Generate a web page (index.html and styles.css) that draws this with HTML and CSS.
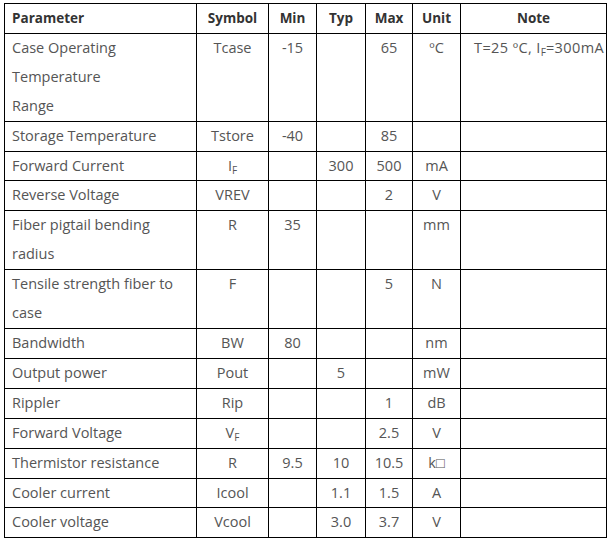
FILE: index.html
```html
<!DOCTYPE html>
<html>
<head>
<meta charset="utf-8">
<link rel="stylesheet" href="styles.css">
</head>
<body>
<table class="spec">
<colgroup>
<col class="c-param"><col class="c-sym"><col class="c-min"><col class="c-typ"><col class="c-max"><col class="c-unit"><col class="c-note">
</colgroup>
<thead>
<tr><th class="left">Parameter</th><th>Symbol</th><th>Min</th><th>Typ</th><th>Max</th><th>Unit</th><th>Note</th></tr>
</thead>
<tbody>
<tr><td class="left">Case Operating<br>Temperature<br>Range</td><td>Tcase</td><td>-15</td><td></td><td>65</td><td>ºC</td><td class="note">T=25 ºC, I<sub>F</sub>=300mA</td></tr>
<tr><td class="left">Storage Temperature</td><td>Tstore</td><td>-40</td><td></td><td>85</td><td></td><td></td></tr>
<tr><td class="left">Forward Current</td><td>I<sub>F</sub></td><td></td><td>300</td><td>500</td><td>mA</td><td></td></tr>
<tr><td class="left">Reverse Voltage</td><td>VREV</td><td></td><td></td><td>2</td><td>V</td><td></td></tr>
<tr><td class="left">Fiber pigtail bending<br>radius</td><td>R</td><td>35</td><td></td><td></td><td>mm</td><td></td></tr>
<tr><td class="left">Tensile strength fiber to<br>case</td><td>F</td><td></td><td></td><td>5</td><td>N</td><td></td></tr>
<tr><td class="left">Bandwidth</td><td>BW</td><td>80</td><td></td><td></td><td>nm</td><td></td></tr>
<tr><td class="left">Output power</td><td>Pout</td><td></td><td>5</td><td></td><td>mW</td><td></td></tr>
<tr><td class="left">Rippler</td><td>Rip</td><td></td><td></td><td>1</td><td>dB</td><td></td></tr>
<tr><td class="left">Forward Voltage</td><td>V<sub>F</sub></td><td></td><td></td><td>2.5</td><td>V</td><td></td></tr>
<tr><td class="left">Thermistor resistance</td><td>R</td><td>9.5</td><td>10</td><td>10.5</td><td>k□</td><td></td></tr>
<tr><td class="left">Cooler current</td><td>Icool</td><td></td><td>1.1</td><td>1.5</td><td>A</td><td></td></tr>
<tr><td class="left">Cooler voltage</td><td>Vcool</td><td></td><td>3.0</td><td>3.7</td><td>V</td><td></td></tr>
</tbody>
</table>
</body>
</html>
```
FILE: styles.css
```css
html, body {
  margin: 0;
  background: #fff;
}
body {
  padding: 3px 0 0 4px;
  font-family: "Open Sans", "Noto Sans", sans-serif;
  font-size: 14.5px;
  color: #555;
}
.spec {
  border-collapse: collapse;
  table-layout: fixed;
  width: 603px;
}
.c-param { width: 192px; }
.c-sym { width: 72px; }
.c-min { width: 48px; }
.c-typ { width: 49px; }
.c-max { width: 47px; }
.c-unit { width: 48px; }
.c-note { width: 146px; }
.spec th, .spec td {
  border: 1px solid #000;
  padding: 0 4px;
  line-height: 28.9px;
  vertical-align: top;
  text-align: center;
  white-space: nowrap;
}
.spec th {
  font-weight: bold;
  font-size: 13.5px;
  color: #333;
}
.spec .left {
  text-align: left;
  padding-left: 7px;
}
.spec .note {
  text-align: left;
  padding-left: 13px;
  letter-spacing: 0.4px;
  overflow: hidden;
}
.spec sub {
  font-size: 10px;
  vertical-align: -3px;
  line-height: 0;
  letter-spacing: 0;
}
```
